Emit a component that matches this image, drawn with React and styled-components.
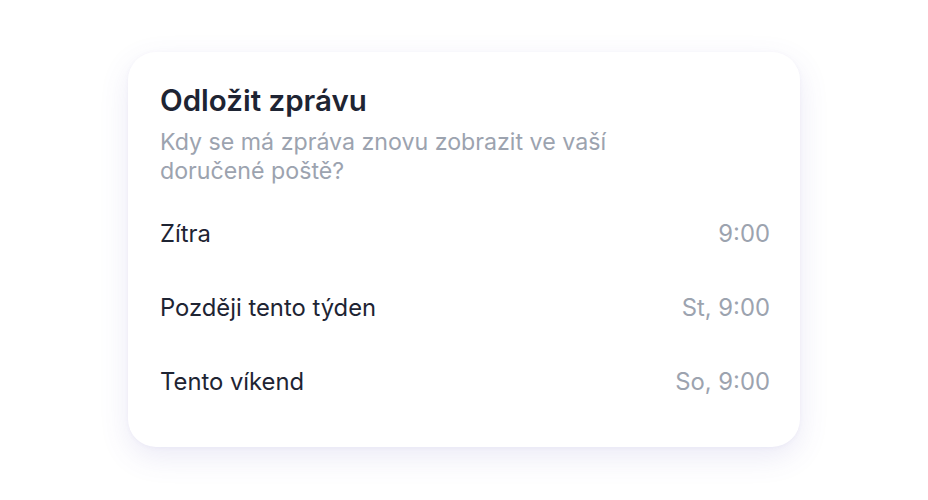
import React from "react";
import styled, { createGlobalStyle } from "styled-components";

const GlobalStyle = createGlobalStyle`
  body {
    margin: 0;
    background: #ffffff;
    font-family: Inter, "Noto Sans", sans-serif;
    -webkit-font-smoothing: antialiased;
  }
`;

const options = [
  { label: "Zítra", time: "9:00" },
  { label: "Později tento týden", time: "St, 9:00" },
  { label: "Tento víkend", time: "So, 9:00" },
];

const App = () => {
  return (
    <Page>
      <GlobalStyle />
      <Card>
        <Title>Odložit zprávu</Title>
        <Subtitle>Kdy se má zpráva znovu zobrazit ve vaší doručené poště?</Subtitle>
        <List>
          {options.map((option) => (
            <Row key={option.label}>
              <Label>{option.label}</Label>
              <Time>{option.time}</Time>
            </Row>
          ))}
        </List>
      </Card>
    </Page>
  );
};

const Page = styled.div`
  display: flex;
  justify-content: center;
  padding-top: 52px;
  width: 928px;
  height: 500px;
  box-sizing: border-box;
`;

const Card = styled.div`
  width: 672px;
  height: 395px;
  box-sizing: border-box;
  padding: 28px 30px 0 32px;
  background: #ffffff;
  border-radius: 28px;
  box-shadow: 0 10px 30px rgba(91, 80, 180, 0.12), 0 1px 4px rgba(91, 80, 180, 0.05);
`;

const Title = styled.h2`
  margin: 0;
  font-size: 29.5px;
  line-height: 40px;
  font-weight: 600;
  color: #1e2433;
`;

const Subtitle = styled.p`
  margin: 8px 0 0;
  max-width: 520px;
  font-size: 23.2px;
  line-height: 29px;
  color: #9ca3af;
`;

const List = styled.div`
  display: flex;
  flex-direction: column;
  margin-top: 10px;
`;

const Row = styled.div`
  display: flex;
  justify-content: space-between;
  align-items: center;
  height: 74px;
  font-size: 23.8px;
`;

const Label = styled.span`
  color: #1e2433;
`;

const Time = styled.span`
  color: #9ca3af;
`;

export default App;
